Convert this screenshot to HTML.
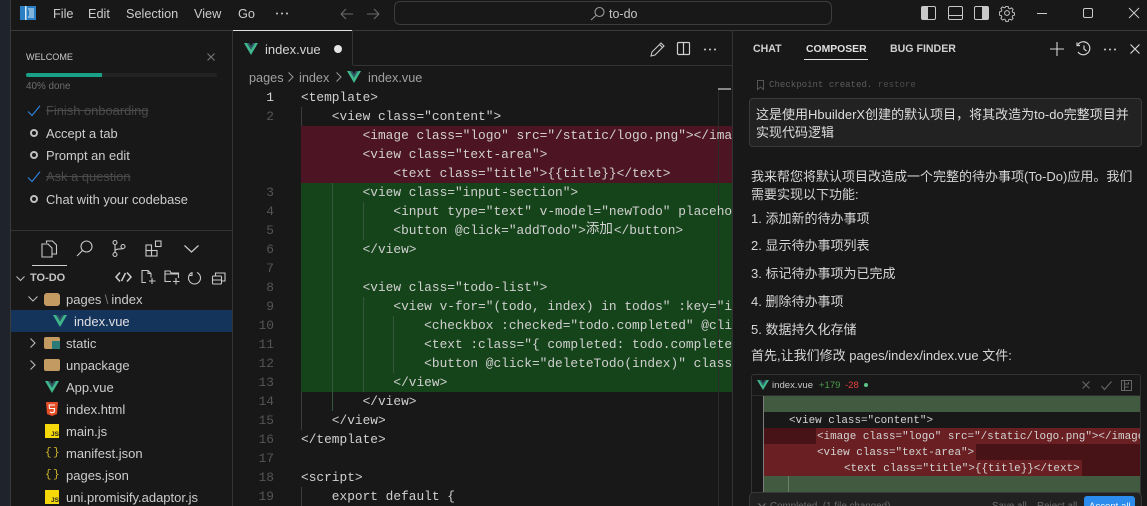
<!DOCTYPE html>
<html><head><meta charset="utf-8">
<style>
*{box-sizing:border-box}
html,body{margin:0;padding:0;background:#181818}
#r{position:relative;width:1147px;height:506px;overflow:hidden;background:#181818;font-family:"Liberation Sans","Noto Sans CJK SC",sans-serif;color:#ccc}
.a{position:absolute}
.t{position:absolute;white-space:pre;font-size:13px;line-height:20px;color:#ccc}
.c{position:absolute;left:0;white-space:pre;font-family:"Liberation Mono","Noto Sans CJK SC",monospace;font-size:12.83px;line-height:19px;height:19px;color:#d0d0d0}
.n{position:absolute;left:240px;width:34px;text-align:right;font-family:"Liberation Mono",monospace;font-size:12.83px;line-height:19px;color:#555}
.g{position:absolute;width:1px}
.d{position:absolute;left:0;white-space:pre;font-family:"Liberation Mono",monospace;font-size:10.92px;line-height:16px;color:#d4d4d4}
svg{position:absolute;overflow:visible;fill:none}
.z{line-height:20px;color:#d6d6d6;font-size:13px}
</style></head><body><div id="r">
<!-- left strip -->
<div class="a" style="left:0;top:0;width:10px;height:506px;background:#1f232b"></div>
<div class="a" style="left:10px;top:0;width:1px;height:506px;background:#3a3a3a"></div>
<!-- title bar -->
<div class="a" style="left:11px;top:30px;width:1136px;height:1px;background:#3a3a3a"></div>
<svg style="left:20px;top:6px" width="16" height="14"><rect width="16" height="14" fill="#2a7fc4"/><rect x="5" y="0" width="1.5" height="14" fill="#d8e8f6"/><path d="M8 3h6M9 5h5M9 7h5M9 9h5M8 11h6" stroke="#d8e8f6"/></svg>
<div class="t" style="left:53px;top:4px;font-size:12.7px">File</div>
<div class="t" style="left:88px;top:4px;font-size:12.7px">Edit</div>
<div class="t" style="left:126px;top:4px;font-size:12.7px">Selection</div>
<div class="t" style="left:194px;top:4px;font-size:12.7px">View</div>
<div class="t" style="left:238px;top:4px;font-size:12.7px">Go</div>
<svg style="left:275px;top:12px" width="14" height="3"><circle cx="2" cy="1.5" r="1" fill="#ccc"/><circle cx="7" cy="1.5" r="1" fill="#ccc"/><circle cx="12" cy="1.5" r="1" fill="#ccc"/></svg>
<svg style="left:340px;top:7px" width="50" height="14" stroke="#6a6a6a" stroke-width="1.1"><path d="M1 7h12M1 7l5-5M1 7l5 5"/><path d="M27 7h12M39 7l-5-5M39 7l-5 5"/></svg>
<div class="a" style="left:394px;top:1px;width:438px;height:24px;border:1px solid #3c3c3c;border-radius:6px"></div>
<svg style="left:590px;top:6px" width="15" height="15" stroke="#9a9a9a" stroke-width="1.1"><circle cx="9.5" cy="6" r="4.5"/><path d="M6 9.5L1 14"/></svg>
<div class="t" style="left:609px;top:4px;color:#c4c4c4;font-size:12.5px">to-do</div>
<!-- layout icons -->
<svg style="left:921px;top:6px" width="15" height="14"><rect x=".5" y=".5" width="14" height="13" rx="1.5" stroke="#c8c8c8"/><rect x="1" y="1" width="6" height="12" fill="#c8c8c8"/></svg>
<svg style="left:948px;top:6px" width="15" height="14"><rect x=".5" y=".5" width="14" height="13" rx="1.5" stroke="#c8c8c8"/><path d="M1 9.5h13" stroke="#c8c8c8"/></svg>
<svg style="left:974px;top:6px" width="15" height="14"><rect x=".5" y=".5" width="14" height="13" rx="1.5" stroke="#c8c8c8"/><rect x="8" y="1" width="6" height="12" fill="#c8c8c8"/></svg>
<svg style="left:999px;top:5px" width="16" height="16" stroke="#c8c8c8"><circle cx="8" cy="8" r="2.4"/><path d="M6.7 .7h2.6l.4 2 1.5.7 1.8-1.1 1.8 1.8-1.1 1.8.7 1.5 2 .4v2.6l-2 .4-.7 1.5 1.1 1.8-1.8 1.8-1.8-1.1-1.5.7-.4 2H6.7l-.4-2-1.5-.7-1.8 1.1-1.8-1.8 1.1-1.8-.7-1.5-2-.4V6.7l2-.4.7-1.5-1.1-1.8 1.8-1.8 1.8 1.1 1.5-.7z" transform="translate(.8 .8) scale(.9)"/></svg>
<div class="a" style="left:1037px;top:13px;width:10px;height:1px;background:#ccc"></div>
<div class="a" style="left:1083px;top:8px;width:10px;height:10px;border:1px solid #ccc;border-radius:2px"></div>
<svg style="left:1129px;top:8px" width="10" height="10" stroke="#ccc"><path d="M0 0l10 10M10 0L0 10"/></svg>
<!-- welcome -->
<div class="t" style="left:26px;top:47px;font-size:9.1px;color:#c8c8c8">WELCOME</div>
<svg style="left:207px;top:53px" width="8" height="8" stroke="#777" stroke-width="1.1"><path d="M.5.5l7 7M7.5.5l-7 7"/></svg>
<div class="a" style="left:26px;top:73px;width:191px;height:4px;background:#232323;border-radius:2px"></div>
<div class="a" style="left:26px;top:73px;width:76px;height:4px;background:#19a187;border-radius:2px 0 0 2px"></div>
<div class="t" style="left:26px;top:77px;font-size:9.9px;color:#6e6e6e">40% done</div>
<svg style="left:27px;top:105px" width="14" height="12" stroke="#2f80d8" stroke-width="1.2"><path d="M1 6.5l4 4L13 .8"/></svg>
<div class="t" style="left:46px;top:101px;color:#4a4a4a;text-decoration:line-through;font-size:12.9px">Finish onboarding</div>
<div class="a" style="left:30px;top:129px;width:8px;height:8px;border:2px solid #c0c0c0;border-radius:50%"></div>
<div class="t" style="left:46px;top:124px;font-size:12.9px">Accept a tab</div>
<div class="a" style="left:30px;top:151px;width:8px;height:8px;border:2px solid #c0c0c0;border-radius:50%"></div>
<div class="t" style="left:46px;top:146px;font-size:12.9px">Prompt an edit</div>
<svg style="left:27px;top:171px" width="14" height="12" stroke="#2f80d8" stroke-width="1.2"><path d="M1 6.5l4 4L13 .8"/></svg>
<div class="t" style="left:46px;top:167px;color:#4a4a4a;text-decoration:line-through;font-size:12.9px">Ask a question</div>
<div class="a" style="left:30px;top:195px;width:8px;height:8px;border:2px solid #c0c0c0;border-radius:50%"></div>
<div class="t" style="left:46px;top:190px;font-size:12.9px">Chat with your codebase</div>
<!-- side divider -->
<div class="a" style="left:11px;top:230px;width:222px;height:1px;background:#333"></div>
<div class="a" style="left:232px;top:31px;width:1px;height:475px;background:#333"></div>
<!-- activity icons -->
<svg style="left:41px;top:240px" width="16" height="18" stroke="#c8c8c8" stroke-width="1.1"><path d="M5.5 3V1h6l4 4v9h-4"/><path d="M1 4h6l4 4v9H1z"/></svg>
<svg style="left:76px;top:240px" width="17" height="17" stroke="#c8c8c8" stroke-width="1.1"><circle cx="10.5" cy="6.5" r="5.5"/><path d="M6.5 10.5L1 16"/></svg>
<svg style="left:112px;top:240px" width="14" height="17" stroke="#c8c8c8" stroke-width="1.1"><circle cx="3" cy="2.5" r="2"/><circle cx="3" cy="14.5" r="2"/><circle cx="11" cy="6.5" r="2"/><path d="M3 4.5v8M3 11c0-3 8-1.5 8-2.5"/></svg>
<svg style="left:145px;top:240px" width="18" height="17" stroke="#c8c8c8" stroke-width="1.1"><rect x="1" y="5" width="5.5" height="5.5"/><rect x="1" y="10.5" width="5.5" height="5.5"/><rect x="6.5" y="10.5" width="5.5" height="5.5"/><rect x="10.5" y="1" width="5.5" height="5.5"/></svg>
<svg style="left:184px;top:245px" width="15" height="8" stroke="#c8c8c8" stroke-width="1.2"><path d="M.5.5L7.5 7 14.5.5"/></svg>
<div class="a" style="left:32px;top:265px;width:35px;height:1px;background:#d0d0d0"></div>
<!-- tree header -->
<svg style="left:16px;top:276px" width="9" height="6" stroke="#bbb" stroke-width="1.1"><path d="M.5.5L4.5 4.5 8.5.5"/></svg>
<div class="t" style="left:30px;top:268px;font-size:11px;font-weight:bold;color:#c4c4c4">TO-DO</div>
<svg style="left:115px;top:271px" width="17" height="12" stroke="#cfcfcf" stroke-width="1.5"><path d="M5 1.5L1 6l4 4.5M12 1.5L16 6l-4 4.5M10.5 2L6.5 10"/></svg>
<svg style="left:141px;top:270px" width="15" height="15" stroke="#c8c8c8" stroke-width="1.1"><path d="M5 12.5H1V.5h6l3 3v4M7 .5v3h3M11 8v6M8 11h6.5"/></svg>
<svg style="left:164px;top:270px" width="16" height="15" stroke="#c8c8c8" stroke-width="1.1"><path d="M7 11.5H1V1h5l1 2h7.5v5M1 4h13.5M12 8v6.5M9 11.5h6.5"/></svg>
<svg style="left:188px;top:271px" width="14" height="14" stroke="#c8c8c8" stroke-width="1.1"><path d="M4 1.5A6 6 0 1 0 9 1.5M4 1v3.5H.8"/></svg>
<svg style="left:212px;top:272px" width="14" height="13" stroke="#c8c8c8" stroke-width="1.1"><rect x=".5" y="4" width="9" height="8" rx="1"/><path d="M3.5 4V1h9.5v8H9.5M.5 8h9"/></svg>
<!-- tree -->
<svg style="left:28px;top:296px" width="10" height="6" stroke="#bbb" stroke-width="1.1"><path d="M.5.5L5 5l4.5-4.5"/></svg>
<div class="a" style="left:44px;top:293px;width:16px;height:13px;background:#c49a63;border-radius:3px"></div>
<div class="t" style="left:66px;top:290px">pages<span style="color:#777;letter-spacing:-.3px"> \ </span>index</div>
<div class="a" style="left:11px;top:310px;width:221px;height:22px;background:#14345c"></div>
<svg style="left:53px;top:315px" width="14" height="12"><path d="M0 0h3l4 6.5L11 0h3L7 12z" fill="#3fb68b"/><path d="M3 0h2.2L7 3 8.8 0H11L7 6.5z" fill="#2f5466"/></svg>
<div class="t" style="left:74px;top:312px;color:#e0e0e0">index.vue</div>
<svg style="left:30px;top:338px" width="6" height="10" stroke="#bbb" stroke-width="1.1"><path d="M.5.5L5 5 .5 9.5"/></svg>
<div class="a" style="left:44px;top:337px;width:16px;height:12px;background:#c49a63;border-radius:2px"></div>
<div class="a" style="left:52px;top:341px;width:8px;height:8px;background:#2b7b78"></div>
<div class="t" style="left:66px;top:334px">static</div>
<svg style="left:30px;top:360px" width="6" height="10" stroke="#bbb" stroke-width="1.1"><path d="M.5.5L5 5 .5 9.5"/></svg>
<div class="a" style="left:44px;top:359px;width:16px;height:12px;background:#c49a63;border-radius:2px"></div>
<div class="t" style="left:66px;top:356px">unpackage</div>
<svg style="left:45px;top:381px" width="14" height="12"><path d="M0 0h3l4 6.5L11 0h3L7 12z" fill="#3fb68b"/><path d="M3 0h2.2L7 3 8.8 0H11L7 6.5z" fill="#2f5466"/></svg>
<div class="t" style="left:66px;top:378px">App.vue</div>
<svg style="left:46px;top:402px" width="12" height="14"><path d="M0 0h12l-1 12-5 2-5-2z" fill="#e44d26"/><path d="M9 3H3.2l.3 3.5H8.5L8.2 10 6 10.8 3.8 10" stroke="#fff" stroke-width="1.1"/></svg>
<div class="t" style="left:66px;top:400px">index.html</div>
<div class="a" style="left:45px;top:424px;width:14px;height:14px;background:#f5d90a"></div>
<div class="a" style="left:51px;top:431px;font:bold 6.5px/7px 'Liberation Sans',sans-serif;color:#222">JS</div>
<div class="t" style="left:66px;top:422px">main.js</div>
<div class="t" style="left:45px;top:443px;color:#d4b82a;font-size:11px;font-family:'Liberation Mono',monospace">{</div>
<div class="t" style="left:53px;top:443px;color:#d4b82a;font-size:11px;font-family:'Liberation Mono',monospace">}</div>
<div class="t" style="left:66px;top:444px">manifest.json</div>
<div class="t" style="left:45px;top:465px;color:#d4b82a;font-size:11px;font-family:'Liberation Mono',monospace">{</div>
<div class="t" style="left:53px;top:465px;color:#d4b82a;font-size:11px;font-family:'Liberation Mono',monospace">}</div>
<div class="t" style="left:66px;top:466px">pages.json</div>
<div class="a" style="left:45px;top:490px;width:14px;height:14px;background:#f5d90a"></div>
<div class="a" style="left:51px;top:497px;font:bold 6.5px/7px 'Liberation Sans',sans-serif;color:#222">JS</div>
<div class="t" style="left:66px;top:488px">uni.promisify.adaptor.js</div>
<!-- tabs -->
<div class="a" style="left:233px;top:30px;width:119px;height:1px;background:#e0e0e0"></div>
<div class="a" style="left:352px;top:31px;width:1px;height:34px;background:#333"></div>
<div class="a" style="left:353px;top:65px;width:380px;height:1px;background:#333"></div>
<svg style="left:244px;top:43px" width="14" height="12"><path d="M0 0h3l4 6.5L11 0h3L7 12z" fill="#3fb68b"/><path d="M3 0h2.2L7 3 8.8 0H11L7 6.5z" fill="#2f5466"/></svg>
<div class="t" style="left:265px;top:40px;color:#d4d4d4">index.vue</div>
<div class="a" style="left:334px;top:45px;width:8px;height:8px;background:#e4e4e4;border-radius:50%"></div>
<svg style="left:650px;top:42px" width="15" height="15" stroke="#c8c8c8" stroke-width="1.1"><path d="M1 14l1-4 9-9 3 3-9 9zM9.5 2.5l3 3"/></svg>
<svg style="left:677px;top:42px" width="14" height="13" stroke="#d0d0d0" stroke-width="1.2"><rect x=".5" y=".5" width="12" height="12" rx="1"/><path d="M6.5.5v12"/></svg>
<svg style="left:703px;top:48px" width="14" height="3"><circle cx="2" cy="1.5" r="1" fill="#ccc"/><circle cx="7" cy="1.5" r="1" fill="#ccc"/><circle cx="12" cy="1.5" r="1" fill="#ccc"/></svg>
<!-- breadcrumbs -->
<div class="t" style="left:249px;top:68px;color:#a0a0a0;font-size:12.7px">pages</div>
<svg style="left:288px;top:72px" width="6" height="10" stroke="#999"><path d="M.5.5L5 5 .5 9.5"/></svg>
<div class="t" style="left:299px;top:68px;color:#a0a0a0;font-size:12.7px">index</div>
<svg style="left:336px;top:72px" width="6" height="10" stroke="#999"><path d="M.5.5L5 5 .5 9.5"/></svg>
<svg style="left:347px;top:71px" width="14" height="12"><path d="M0 0h3l4 6.5L11 0h3L7 12z" fill="#3fb68b"/><path d="M3 0h2.2L7 3 8.8 0H11L7 6.5z" fill="#2f5466"/></svg>
<div class="t" style="left:368px;top:68px;color:#a0a0a0;font-size:12.7px">index.vue</div>
<!-- code -->
<div class="a" style="left:301px;top:126px;width:431px;height:57px;background:#4d1524"></div>
<div class="a" style="left:301px;top:183px;width:431px;height:209px;background:#16441a"></div>
<div class="g" style="left:301px;top:107px;height:19px;background:#3c3c3c"></div>
<div class="g" style="left:301px;top:392px;height:38px;background:#3c3c3c"></div>
<div class="g" style="left:301px;top:487px;height:19px;background:#3c3c3c"></div>
<div class="g" style="left:332px;top:183px;height:228px;background:#35563a"></div>
<div class="g" style="left:363px;top:202px;height:38px;background:#35563a"></div>
<div class="g" style="left:363px;top:297px;height:95px;background:#35563a"></div>
<div class="g" style="left:393px;top:316px;height:57px;background:#35563a"></div>
<div class="a" style="left:718px;top:88px;width:1px;height:418px;background:#2b2b2b"></div>
<div class="a" style="left:718px;top:88px;width:13px;height:2px;background:#888"></div>
<div class="a" id="code" style="left:301px;top:88px;width:431px;height:418px;overflow:hidden">
<div class="c" style="top:0">&lt;template&gt;</div>
<div class="c" style="top:19px">    &lt;view class="content"&gt;</div>
<div class="c" style="top:38px">        &lt;image class="logo" src="/static/logo.png"&gt;&lt;/image&gt;</div>
<div class="c" style="top:57px">        &lt;view class="text-area"&gt;</div>
<div class="c" style="top:76px">            &lt;text class="title"&gt;{{title}}&lt;/text&gt;</div>
<div class="c" style="top:95px">        &lt;view class="input-section"&gt;</div>
<div class="c" style="top:114px">            &lt;input type="text" v-model="newTodo" placeholder="</div>
<div class="c" style="top:133px">            &lt;button @click="addTodo"&gt;<span style="display:inline-block;width:28px;height:19px;overflow:hidden;vertical-align:top;font-size:13.5px;line-height:19px">添加</span>&lt;/button&gt;</div>
<div class="c" style="top:152px">        &lt;/view&gt;</div>
<div class="c" style="top:190px">        &lt;view class="todo-list"&gt;</div>
<div class="c" style="top:209px">            &lt;view v-for="(todo, index) in todos" :key="index"&gt;</div>
<div class="c" style="top:228px">                &lt;checkbox :checked="todo.completed" @click="</div>
<div class="c" style="top:247px">                &lt;text :class="{ completed: todo.completed }"</div>
<div class="c" style="top:266px">                &lt;button @click="deleteTodo(index)" class="</div>
<div class="c" style="top:285px">            &lt;/view&gt;</div>
<div class="c" style="top:304px">        &lt;/view&gt;</div>
<div class="c" style="top:323px">    &lt;/view&gt;</div>
<div class="c" style="top:342px">&lt;/template&gt;</div>
<div class="c" style="top:380px">&lt;script&gt;</div>
<div class="c" style="top:399px">    export default {</div>
</div>
<!-- gutter -->
<div class="n" style="top:88px;color:#d4d4d4">1</div>
<div class="n" style="top:107px">2</div>
<div class="n" style="top:183px">3</div>
<div class="n" style="top:202px">4</div>
<div class="n" style="top:221px">5</div>
<div class="n" style="top:240px">6</div>
<div class="n" style="top:259px">7</div>
<div class="n" style="top:278px">8</div>
<div class="n" style="top:297px">9</div>
<div class="n" style="top:316px">10</div>
<div class="n" style="top:335px">11</div>
<div class="n" style="top:354px">12</div>
<div class="n" style="top:373px">13</div>
<div class="n" style="top:392px">14</div>
<div class="n" style="top:411px">15</div>
<div class="n" style="top:430px">16</div>
<div class="n" style="top:449px">17</div>
<div class="n" style="top:468px">18</div>
<div class="n" style="top:487px">19</div>
<!-- right panel -->
<div class="a" style="left:732px;top:31px;width:1px;height:475px;background:#333"></div>
<div class="t" style="left:753px;top:39px;font-size:10.6px;font-weight:bold;color:#d0d0d0;line-height:21px">CHAT</div>
<div class="t" style="left:806px;top:39px;font-size:10.4px;font-weight:bold;color:#e0e0e0;line-height:21px">COMPOSER</div>
<div class="a" style="left:804px;top:59px;width:64px;height:1px;background:#e0e0e0"></div>
<div class="t" style="left:890px;top:39px;font-size:10.6px;font-weight:bold;color:#d0d0d0;line-height:21px">BUG FINDER</div>
<svg style="left:1050px;top:42px" width="14" height="14" stroke="#d4d4d4" stroke-width="1.1"><path d="M7 0v14M0 7h14"/></svg>
<svg style="left:1076px;top:42px" width="15" height="14" stroke="#d0d0d0" stroke-width="1.2"><path d="M2 2.5A6.5 6.5 0 1 1 2 10M1 .5v3h3M8 3.5V7l2.5 2"/></svg>
<svg style="left:1103px;top:48px" width="14" height="3"><circle cx="2" cy="1.5" r="1" fill="#ccc"/><circle cx="7" cy="1.5" r="1" fill="#ccc"/><circle cx="12" cy="1.5" r="1" fill="#ccc"/></svg>
<svg style="left:1130px;top:44px" width="10" height="10" stroke="#d4d4d4" stroke-width="1.2"><path d="M.5.5l9 9M9.5.5l-9 9"/></svg>
<svg style="left:757px;top:80px" width="7" height="10" stroke="#555"><path d="M.5.5h6v9L3.5 7 .5 9.5z"/></svg>
<div class="t" style="left:769px;top:75px;font-family:'Liberation Mono',monospace;font-size:9.07px;color:#5c5c5c">Checkpoint created. <span style="color:#4c4c4c">restore</span></div>
<div class="a" style="left:749px;top:98px;width:393px;height:49px;background:#222;border:1px solid #3a3a3a;border-radius:4px"></div>
<div class="t z" style="left:756px;top:106px;color:#ddd;font-size:13px;line-height:18px">这是使用HbuilderX创建的默认项目，将其改造为to-do完整项目并
实现代码逻辑</div>
<div class="t z" style="left:751px;top:168px;line-height:18px">我来帮您将默认项目改造成一个完整的待办事项(To-Do)应用。我们
需要实现以下功能:</div>
<div class="t z" style="left:751px;top:209px">1. 添加新的待办事项</div>
<div class="t z" style="left:751px;top:236px">2. 显示待办事项列表</div>
<div class="t z" style="left:751px;top:264px">3. 标记待办事项为已完成</div>
<div class="t z" style="left:751px;top:292px">4. 删除待办事项</div>
<div class="t z" style="left:751px;top:320px">5. 数据持久化存储</div>
<div class="t z" style="left:751px;top:346px">首先,让我们修改 pages/index/index.vue 文件:</div>
<!-- diff -->
<div class="a" style="left:751px;top:374px;width:390px;height:132px;background:#181818;border:1px solid #333;border-radius:3px 3px 0 0"></div>
<div class="a" style="left:752px;top:395px;width:388px;height:1px;background:#2c2c2c"></div>
<svg style="left:757px;top:380px" width="12" height="10"><path d="M0 0h2.5l3.5 5.5L9.5 0H12L6 10z" fill="#3fb68b"/><path d="M2.5 0h2L6 2.5 7.5 0h2L6 5.5z" fill="#2f5466"/></svg>
<div class="t" style="left:772px;top:376px;font-size:9.6px;line-height:20px;color:#c8c8c8">index.vue</div>
<div class="t" style="left:819px;top:376px;font-size:9.5px;line-height:20px;color:#4f9a4f">+179</div>
<div class="t" style="left:845px;top:376px;font-size:9.5px;line-height:20px;color:#e84040">-28</div>
<div class="a" style="left:864px;top:383px;width:4px;height:4px;border-radius:50%;background:#5fc48a"></div>
<svg style="left:1082px;top:381px" width="8" height="8" stroke="#666" stroke-width="1.1"><path d="M.5.5l7 7M7.5.5l-7 7"/></svg>
<svg style="left:1101px;top:381px" width="11" height="9" stroke="#666" stroke-width="1.1"><path d="M.5 5l3 3.5L10.5.5"/></svg>
<svg style="left:1121px;top:380px" width="11" height="11" stroke="#666"><rect x=".5" y=".5" width="10" height="10"/><path d="M3.5.5v10M3.5 4h4V2M3.5 7h4"/></svg>
<div class="a" style="left:763px;top:396px;width:377px;height:16px;background:#425a3f"></div>
<div class="a" style="left:763px;top:428px;width:377px;height:48px;background:#481317"></div>
<div class="a" style="left:816px;top:428px;width:324px;height:16px;background:#6a2022"></div>
<div class="a" style="left:763px;top:444px;width:213px;height:16px;background:#6a2022"></div>
<div class="a" style="left:763px;top:460px;width:319px;height:16px;background:#6a2022"></div>
<div class="a" style="left:763px;top:476px;width:377px;height:30px;background:#425a3f"></div>
<div class="a" style="left:763px;top:396px;width:1px;height:110px;background:#7c7c7c"></div>
<div class="a" style="left:788px;top:476px;width:1px;height:30px;background:#6c7f6a"></div>
<div class="a" style="left:763px;top:396px;width:377px;height:110px;overflow:hidden">
<div class="d" style="left:26px;top:17px">&lt;view class="content"&gt;</div>
<div class="d" style="left:54px;top:33px">&lt;image class="logo" src="/static/logo.png"&gt;&lt;/image&gt;</div>
<div class="d" style="left:54px;top:49px">&lt;view class="text-area"&gt;</div>
<div class="d" style="left:81px;top:65px">&lt;text class="title"&gt;{{title}}&lt;/text&gt;</div>
</div>
<!-- bottom bar -->
<div class="a" style="left:749px;top:492px;width:393px;height:14px;background:#212121;border:1px solid #383838;border-bottom:0;border-radius:5px 5px 0 0"></div>
<svg style="left:758px;top:503px" width="8" height="4" stroke="#777"><path d="M.5.5L4 4 7.5.5"/></svg>
<div class="t" style="left:770px;top:497px;font-size:9.8px;line-height:20px;color:#6a6a6a">Completed  (1 file changed)</div>
<div class="t" style="left:992px;top:497px;font-size:9.8px;line-height:20px;color:#6a6a6a">Save all</div>
<div class="t" style="left:1037px;top:497px;font-size:9.8px;line-height:20px;color:#6a6a6a">Reject all</div>
<div class="a" style="left:1084px;top:496px;width:51px;height:10px;background:#2b8cee;border-radius:3px 3px 0 0"></div>
<div class="t" style="left:1089px;top:497px;font-size:9.6px;line-height:20px;color:#f0f6ff">Accept all</div>
</div></body></html>
